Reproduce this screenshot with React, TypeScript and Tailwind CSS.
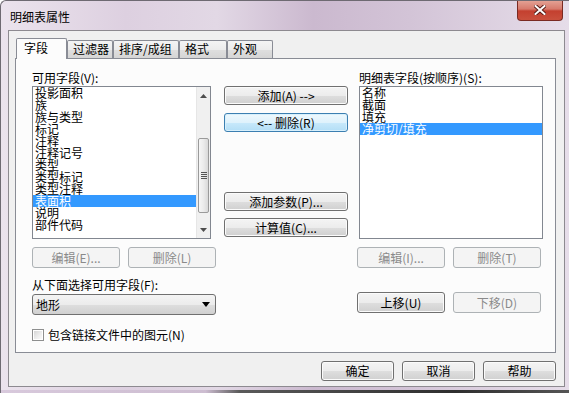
import React from "react";

const F = "font-['Noto_Sans_CJK_SC','Noto_Sans',sans-serif]";

type BtnProps = {
  children: React.ReactNode;
  className?: string;
  kind?: "normal" | "disabled" | "focus";
};

function Btn({ children, className = "", kind = "normal" }: BtnProps) {
  const k =
    kind === "disabled"
      ? "border-[#adb2b5] bg-[#f4f4f4] text-[#8a8a8a]"
      : kind === "focus"
      ? "border-[#3c7fb1] bg-[linear-gradient(#eef8fd_0%,#dff2fc_50%,#c8e9fb_51%,#b3def6_100%)] text-black shadow-[inset_0_0_0_1px_#d8f0fc]"
      : "border-[#707070] bg-[linear-gradient(#f4f4f4_0%,#ececec_50%,#dedede_51%,#d0d0d0_100%)] text-black shadow-[inset_0_0_0_1px_#fbfbfb]";
  return (
    <div
      className={`flex items-center justify-center rounded-[3px] border text-[12px] leading-[14px] whitespace-pre ${k} ${className}`}
    >
      {children}
    </div>
  );
}

function Item({ text, sel }: { text: string; sel?: boolean }) {
  return (
    <div
      className={`h-[12px] shrink-0 leading-[12px] pl-[2px] whitespace-nowrap text-[12px] ${
        sel ? "bg-[#3399ff] text-white" : "text-black"
      }`}
    >
      {text}
    </div>
  );
}

function Scrollbar() {
  return (
    <div className="w-[14px] shrink-0 h-full flex flex-col bg-[#f0f0f0] border-l border-[#e6e6e6]">
      <div className="h-[17px] shrink-0 flex items-center justify-center">
        <svg width="7" height="4" viewBox="0 0 7 4">
          <path d="M0 4 L3.5 0 L7 4 Z" fill="#4d4d4d" />
        </svg>
      </div>
      <div className="h-[34px] shrink-0" />
      <div className="h-[75px] shrink-0 mx-[1px] rounded-[2px] border border-[#9a9a9a] bg-[linear-gradient(90deg,#f6f6f6_0%,#ebebeb_50%,#d9d9d9_100%)] flex flex-col items-center justify-center gap-[1px]">
        <div className="w-[6px] h-[1px] bg-[#555]" />
        <div className="w-[6px] h-[1px] bg-[#555]" />
        <div className="w-[6px] h-[1px] bg-[#555]" />
        <div className="w-[6px] h-[1px] bg-[#555]" />
      </div>
      <div className="flex-1" />
      <div className="h-[17px] shrink-0 flex items-center justify-center">
        <svg width="7" height="4" viewBox="0 0 7 4">
          <path d="M0 0 L3.5 4 L7 0 Z" fill="#4d4d4d" />
        </svg>
      </div>
    </div>
  );
}

function Tab({
  label,
  w,
  sel,
}: {
  label: string;
  w: string;
  sel?: boolean;
}) {
  if (sel) {
    return (
      <div
        className={`${w} h-[21px] -mb-[1px] relative z-10 border border-b-0 border-[#898c95] bg-[#fcfcfc] rounded-t-[2px] pl-[7px] pt-[2px] text-[12px] leading-[14px] text-black`}
      >
        {label}
      </div>
    );
  }
  return (
    <div
      className={`${w} h-[18px] border border-b-0 border-[#898c95] bg-[linear-gradient(#f4f4f4_0%,#ececec_50%,#dfdfdf_51%,#d5d5d5_100%)] rounded-t-[2px] pl-[5px] pt-[1px] text-[12px] leading-[14px] text-black whitespace-nowrap`}
    >
      {label}
    </div>
  );
}

export default function App() {
  const leftItems = [
    "投影面积",
    "族",
    "族与类型",
    "标记",
    "注释",
    "注释记号",
    "类型",
    "类型标记",
    "类型注释",
    "表面积",
    "说明",
    "部件代码",
  ];
  const rightItems = ["名称", "截面", "填充", "净剪切/填充"];

  return (
    <div
      className={`${F} relative w-[569px] h-[393px] overflow-hidden rounded-tl-[6px] border-l border-t border-[#6e6a72] bg-[linear-gradient(90deg,#ebe3ed_0%,#ddd0e0_22%,#e2d8e5_38%,#cbb9cf_55%,#d3c4d7_72%,#e6dde9_100%)] flex flex-col`}
    >
      {/* title bar */}
      <div className="h-[29px] shrink-0 pl-[9px] pt-[9px] text-[12px] leading-[14px] text-black">
        明细表属性
      </div>
      <div className="absolute -top-[1px] right-[6px] w-[46px] h-[21px] rounded-b-[4px] border border-t-0 border-[#7a2a22] bg-[linear-gradient(#e5a598_0%,#d77a6c_45%,#c4402f_55%,#c9503d_100%)] flex items-center justify-center">
        <svg width="12" height="10" viewBox="0 0 12 10">
          <path d="M1.5 1 L10.5 9 M10.5 1 L1.5 9" stroke="#5a1d17" strokeWidth="4" strokeLinecap="square" />
          <path d="M1.5 1 L10.5 9 M10.5 1 L1.5 9" stroke="#ffffff" strokeWidth="2" strokeLinecap="square" />
        </svg>
      </div>

      {/* client area */}
      <div className="ml-[7px] w-[557px] h-[357px] shrink-0 border border-[#8d8a90] bg-[#f0f0f0] flex flex-col pl-[6px] pr-[8px] pt-[7px]">
        {/* tabs */}
        <div className="h-[20px] flex items-end pl-[1px]">
          <Tab label="字段" w="w-[51px]" sel />
          <Tab label="过滤器" w="w-[46px]" />
          <Tab label="排序/成组" w="w-[66px]" />
          <Tab label="格式" w="w-[48px]" />
          <Tab label="外观" w="w-[46px]" />
        </div>

        {/* panel */}
        <div className="w-[541px] h-[295px] border border-[#898c95] bg-[#fcfcfc] flex text-[12px] text-black">
          {/* left column */}
          <div className="ml-[16px] w-[184px] flex flex-col">
            <div className="pt-[11px] leading-[16px] h-[27px]">可用字段(V):</div>
            <div className="w-[179px] h-[153px] border border-[#828790] bg-white flex overflow-hidden">
              <div className="flex-1 flex flex-col overflow-hidden">
                {leftItems.map((t) => (
                  <Item key={t} text={t} sel={t === "表面积"} />
                ))}
              </div>
              <Scrollbar />
            </div>
            <div className="mt-[8px] flex gap-[8px]">
              <Btn kind="disabled" className="w-[88px] h-[21px]">
                编辑(E)...
              </Btn>
              <Btn kind="disabled" className="w-[88px] h-[21px]">
                删除(L)
              </Btn>
            </div>
            <div className="mt-[9px] leading-[16px]">从下面选择可用字段(F):</div>
            <div className="mt-[1px] w-[184px] h-[21px] rounded-[3px] border border-[#707070] bg-[linear-gradient(#f4f4f4_0%,#ececec_50%,#dedede_51%,#d0d0d0_100%)] flex items-center pl-[3px] pr-[5px]">
              <span className="flex-1 leading-[14px]">地形</span>
              <svg width="8" height="5" viewBox="0 0 8 5">
                <path d="M0 0 L8 0 L4 5 Z" fill="#000" />
              </svg>
            </div>
            <div className="mt-[12px] flex items-center gap-[4px] leading-[16px]">
              <div className="w-[12px] h-[12px] border border-[#8e8f8f] bg-white p-[1px]">
                <div className="w-full h-full bg-[linear-gradient(135deg,#d6d6d6_0%,#eeeeee_60%,#fafafa_100%)]" />
              </div>
              <span className="whitespace-nowrap">包含链接文件中的图元(N)</span>
            </div>
          </div>

          {/* middle column */}
          <div className="ml-[8px] w-[124px] flex flex-col pt-[27px]">
            <Btn className="h-[19px]">添加(A) --&gt;</Btn>
            <Btn kind="focus" className="h-[19px] mt-[8px]">
              &lt;-- 删除(R)
            </Btn>
            <Btn className="h-[19px] mt-[60px]">添加参数(P)...</Btn>
            <Btn className="h-[19px] mt-[7px]">计算值(C)...</Btn>
          </div>

          {/* right column */}
          <div className="ml-[9px] w-[185px] flex flex-col">
            <div className="pt-[11px] pl-[2px] leading-[16px] h-[27px] whitespace-nowrap">
              明细表字段(按顺序)(S):
            </div>
            <div className="ml-[2px] w-[184px] h-[153px] border border-[#828790] bg-white flex flex-col overflow-hidden">
              {rightItems.map((t) => (
                <Item key={t} text={t} sel={t === "净剪切/填充"} />
              ))}
            </div>
            <div className="mt-[8px] flex gap-[8px]">
              <Btn kind="disabled" className="w-[88px] h-[21px]">
                编辑(I)...
              </Btn>
              <Btn kind="disabled" className="w-[88px] h-[21px]">
                删除(T)
              </Btn>
            </div>
            <div className="mt-[24px] flex gap-[8px]">
              <Btn className="w-[88px] h-[21px]">上移(U)</Btn>
              <Btn kind="disabled" className="w-[88px] h-[21px]">
                下移(D)
              </Btn>
            </div>
          </div>
        </div>

        {/* bottom buttons */}
        <div className="mt-[8px] flex justify-end gap-[8px]">
          <Btn className="w-[73px] h-[20px]">确定</Btn>
          <Btn className="w-[73px] h-[20px]">取消</Btn>
          <Btn className="w-[73px] h-[20px]">帮助</Btn>
        </div>
      </div>

      {/* bottom frame */}
      <div className="h-[3px] shrink-0" />
      <div className="h-[3px] shrink-0 bg-[linear-gradient(90deg,#d8c9dc_0%,#cdbdd1_36%,#5a5a5a_42%,#2e2e2e_80%,#555_100%)]" />
    </div>
  );
}
